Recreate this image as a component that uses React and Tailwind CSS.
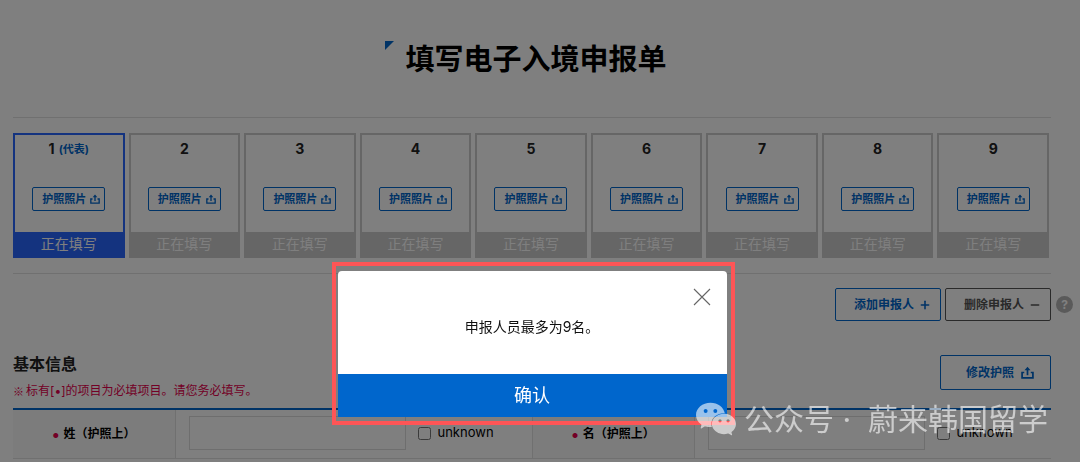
import { useState } from 'react';
import { Plus, Minus } from 'lucide-react';
import { SiWechat } from 'react-icons/si';

const people = [1, 2, 3, 4, 5, 6, 7, 8, 9];

const fields = [
    { id: 'surname', label: '姓（护照上）' },
    { id: 'given-name', label: '名（护照上）' }
];

function UploadIcon({ className }) {
    return (
        <svg viewBox="0 0 12 12" fill="none" stroke="currentColor" strokeWidth="1.6" className={className} aria-hidden="true">
            <path d="M3 6H1v5h10V6H9" />
            <path d="M6 8.5V3" />
            <path d="M3.2 4 6 0.6 8.8 4z" fill="currentColor" stroke="none" />
        </svg>
    );
}

function PersonCard({ number, active }) {
    return (
        <li className={`flex flex-col items-center border-2 pt-1 ${active ? 'border-[#2966ff]' : 'border-[#cccccc]'}`}>
            <p className="flex h-5 items-center gap-1 text-sm leading-5 font-bold text-[#222222]">
                {number}
                {number === 1 && <span className="text-[11px] text-[#0066cc]">(代表)</span>}
            </p>
            <button
                type="button"
                className="mt-7 flex h-6 items-center gap-1 rounded-xs border border-[#0066cc] pr-1 pl-[9px] text-[11px] font-bold whitespace-nowrap text-[#0066cc]"
            >
                护照照片
                <UploadIcon className="size-2.5" />
            </button>
            <p className={`mt-[21px] h-6 w-full text-center text-sm leading-6 text-white ${active ? 'bg-[#2966ff]' : 'bg-[#cccccc]'}`}>
                正在填写
            </p>
        </li>
    );
}

function LimitDialog({ onClose }) {
    return (
        <div className="fixed inset-0 flex items-start justify-center bg-black/50 pt-[262px] pr-3.5">
            <div className="w-[403px] border-4 border-[#fe5556] pt-[5px] pr-1 pb-1 pl-0.5">
                <div role="dialog" aria-modal="true" aria-label="提示" className="relative overflow-hidden rounded-t bg-white">
                    <button type="button" aria-label="关闭" onClick={onClose} className="absolute top-[17px] right-4">
                        <svg viewBox="0 0 18 18" fill="none" stroke="#666666" strokeWidth="1.1" className="size-[18px]">
                            <path d="M1 1l16 16M17 1L1 17" />
                        </svg>
                    </button>
                    <p className="pt-[46px] pb-[37px] text-center text-sm leading-5 text-[#111111]">
                        申报人员最多为9名。
                    </p>
                    <button type="button" onClick={onClose} className="block h-[43px] w-full bg-[#0066cc] text-lg text-white">
                        确认
                    </button>
                </div>
            </div>
        </div>
    );
}

export default function App() {
    const [open, setOpen] = useState(true);

    return (
        <div className="bg-white font-['Inter','Noto_Sans_CJK_SC',sans-serif] text-black">
            <main className="pr-[29px] pl-[13px]">
                {/* Page title */}
                <header className="flex justify-center pt-10 pb-[37px] pl-2">
                    <h1 className="relative text-[29px] leading-10 font-bold">
                        <svg viewBox="0 0 9 9" className="absolute top-px -left-5 size-[9px]" aria-hidden="true">
                            <path d="M0 0h9L0 9z" fill="#0066cc" />
                        </svg>
                        填写电子入境申报单
                    </h1>
                </header>

                {/* Applicants */}
                <ul className="grid grid-cols-9 gap-1 border-y border-[#e0e0e0] py-[15px] pr-0.5">
                    {people.map((n) => (
                        <PersonCard key={n} number={n} active={n === 1} />
                    ))}
                </ul>

                <div className="-mr-[22px] mt-3.5 flex items-center justify-end gap-1 text-xs font-bold">
                    <button
                        type="button"
                        onClick={() => setOpen(true)}
                        className="flex h-[33px] items-center gap-1.5 rounded-xs border border-[#0066cc] pr-2.5 pl-[18px] text-[#0066cc]"
                    >
                        添加申报人
                        <Plus className="size-2.5 scale-125" strokeWidth={3} />
                    </button>
                    <button
                        type="button"
                        className="flex h-[33px] items-center gap-1.5 rounded-xs border border-[#555555] pr-2.5 pl-[18px] text-[#555555]"
                    >
                        删除申报人
                        <Minus className="size-2.5 scale-125" strokeWidth={3} />
                    </button>
                    <button type="button" aria-label="帮助" className="ml-px size-[17px] rounded-full bg-[#b4b4b4] leading-[17px] text-white">
                        ?
                    </button>
                </div>

                {/* Basic information */}
                <section className="mt-[33px]">
                    <div className="flex items-start justify-between pb-2">
                        <div>
                            <h2 className="text-base leading-5 font-bold text-[#222222]">基本信息</h2>
                            <p className="mt-2 flex h-[18px] items-center gap-0.5 text-xs leading-[18px] text-[#e6004c]">
                                <span className="font-['Noto_Sans_CJK_SC',sans-serif] text-[11px]">※</span>
                                <span>标有[•]的项目为必填项目。请您务必填写。</span>
                            </p>
                        </div>
                        <button
                            type="button"
                            className="mt-px flex h-[35px] items-center gap-[7px] rounded-xs border border-[#0066cc] pr-4 pl-[25px] text-xs font-bold text-[#0066cc]"
                        >
                            修改护照
                            <UploadIcon className="size-[13px]" />
                        </button>
                    </div>
                    <table className="w-full table-fixed border-t-2 border-[#0066cc]">
                        <colgroup>
                            <col className="w-[162px]" />
                            <col />
                            <col className="w-[162px]" />
                            <col />
                        </colgroup>
                        <tbody>
                            <tr className="border-b border-[#e0e0e0]">
                                {fields.map((field) => [
                                    <th key={field.id} scope="row" className="border-r border-[#e0e0e0] bg-[#f9f9f9] text-xs font-bold">
                                        <label htmlFor={field.id} className="flex items-center justify-center gap-1 whitespace-nowrap">
                                            <span className="text-base leading-4 text-[#e6004c]">•</span>
                                            {field.label}
                                        </label>
                                    </th>,
                                    <td key={`${field.id}-value`} className="border-r border-[#e0e0e0] pt-1.5 pb-2 pl-[13px] last:border-r-0">
                                        <div className="flex items-center">
                                            <input id={field.id} type="text" className="h-[34px] w-[217px] border border-[#dcdcdc] bg-white px-2 text-sm" />
                                            <label className="ml-3 flex items-center gap-[7px] text-[13px]">
                                                <input type="checkbox" className="size-[13px]" />
                                                unknown
                                            </label>
                                        </div>
                                    </td>
                                ])}
                            </tr>
                        </tbody>
                    </table>
                </section>
            </main>

            {open && <LimitDialog onClose={() => setOpen(false)} />}

            {/* Account watermark */}
            <div className="pointer-events-none fixed right-8 bottom-[23px] flex items-center gap-2 text-white/60">
                <SiWechat className="size-10" />
                <span className="text-[30px] leading-10 whitespace-nowrap">公众号 · &nbsp;蔚来韩国留学</span>
            </div>
        </div>
    );
}
